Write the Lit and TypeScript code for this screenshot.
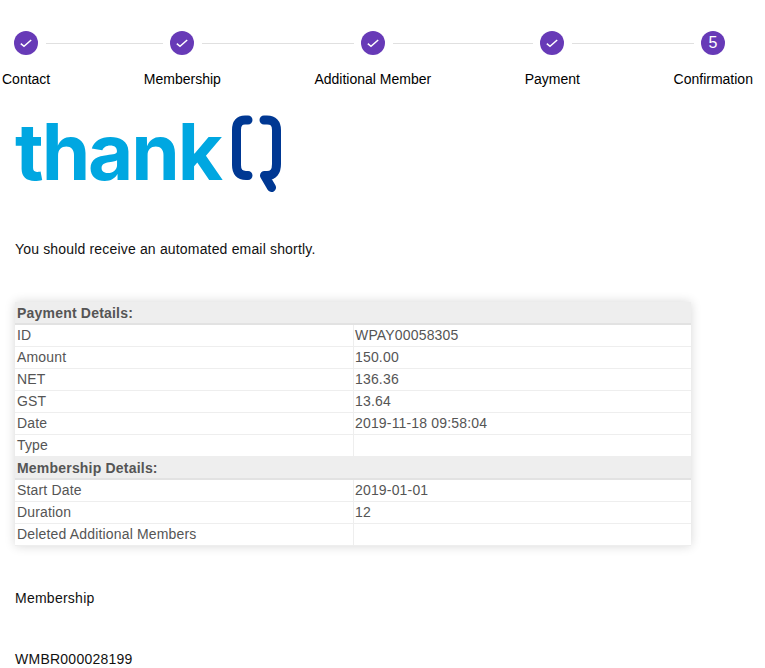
import { LitElement, html, css } from "lit";
import { customElement } from "lit/decorators.js";

const steps = [
  { label: "Contact", line: 117 },
  { label: "Membership", line: 152 },
  { label: "Additional Member", line: 140 },
  { label: "Payment", line: 122 },
  { label: "Confirmation", line: 0, num: "5" },
];

const tables: [string, [string, string][]][] = [
  ["Payment Details:", [["ID", "WPAY00058305"], ["Amount", "150.00"], ["NET", "136.36"], ["GST", "13.64"], ["Date", "2019-11-18 09:58:04"], ["Type", ""]]],
  ["Membership Details:", [["Start Date", "2019-01-01"], ["Duration", "12"], ["Deleted Additional Members", ""]]],
];

@customElement("app-root")
export class AppRoot extends LitElement {
  static styles = css`
    :host { display: block; font-family: "Liberation Sans", Arial, sans-serif; font-size: 14px; color: #111; height: 668px; overflow: hidden; background: #fff; }
    .circles { display: flex; align-items: center; padding: 31px 0 0 14px; height: 24px; }
    .circle { width: 24px; height: 24px; border-radius: 50%; background: #673ab7; color: #fff; display: flex; align-items: center; justify-content: center; flex: none; font-size: 16px; }
    .line { height: 1px; background: #e0e0e0; margin: 0 7px 0 8px; flex: none; }
    .labels { display: flex; justify-content: space-between; padding: 16px 12px 0 2px; line-height: 16px; color: #000; }
    .logo { display: block; margin: 10px 0 0 5px; height: 100px; }
    .logo text { font-family: Inter, sans-serif; font-weight: 700; font-size: 78px; letter-spacing: -2.1px; fill: #00a7e1; }
    .msg { margin: 0; padding: 42px 0 0 15px; line-height: 20px; color: #111; letter-spacing: .17px; }
    .card { margin: 43px 0 0 15px; width: 676px; box-shadow: 0 0 10px rgba(0,0,0,.16); }
    table { border-collapse: separate; border-spacing: 0; width: 100%; table-layout: fixed; color: #555; letter-spacing: .17px; }
    col.key { width: 339px; }
    th { background: #eee; text-align: left; font-weight: 700; height: 20px; padding: 1px 2px 0; border-bottom: 2px solid #e2e2e2; line-height: 16px; letter-spacing: .2px; }
    td { height: 19px; padding: 0 2px 2px; border-bottom: 1px solid #eee; line-height: 16px; }
    td:first-child { border-right: 1px solid #eee; }
    td + td { padding-left: 1px; }
    .foot { margin: 0; padding-left: 15px; line-height: 20px; color: #111; letter-spacing: .25px; }
    .f1 { padding-top: 42px; }
    .f2 { padding-top: 41px; }
  `;
  render() {
    return html`
      <div class="circles">
        ${steps.map((s) => html`
          <span class="circle">${s.num ?? html`<svg width="12" height="12" viewBox="0 0 12 12"><path d="M.8 6.6 4 9.3 11.2 3" fill="none" stroke="#fff" stroke-width="1.5"/></svg>`}</span>
          ${s.line ? html`<span class="line" style="width:${s.line}px"></span>` : ""}
        `)}
      </div>
      <div class="labels">${steps.map((s) => html`<span>${s.label}</span>`)}</div>
      <svg class="logo" width="280" height="100" viewBox="5 97 280 100">
        <text x="15" y="179.5">thank</text>
        <path d="M248 120H245Q236.5 120 236.5 130V165Q236.5 175.5 246 175.5H248M264 120H267Q276.5 120 276.5 130V164Q276.5 175.5 267 175.5H264.5L271.5 187.5" fill="none" stroke="#003893" stroke-width="9" stroke-linecap="round" stroke-linejoin="round"/>
      </svg>
      <p class="msg">You should receive an automated email shortly.</p>
      <div class="card">
        <table>
          <colgroup><col class="key" /><col /></colgroup>
          ${tables.map(([title, rows]) => html`
            <tr><th colspan="2">${title}</th></tr>
            ${rows.map(([k, v]) => html`<tr><td>${k}</td><td>${v}</td></tr>`)}
          `)}
        </table>
      </div>
      <p class="foot f1">Membership</p>
      <p class="foot f2">WMBR000028199</p>
    `;
  }
}
